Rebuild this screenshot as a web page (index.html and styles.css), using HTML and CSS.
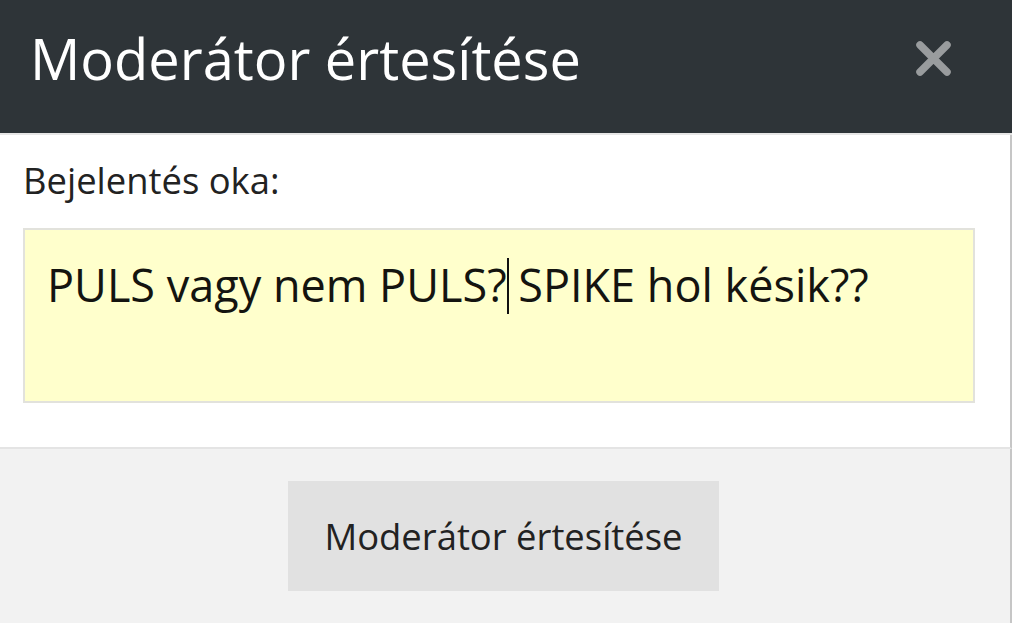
FILE: index.html
```html
<!DOCTYPE html>
<html lang="hu">
<head>
<meta charset="utf-8">
<title>Moderátor értesítése</title>
<link rel="stylesheet" href="styles.css">
</head>
<body>
<div class="dialog">
  <header class="dlg-header">
    <h1 class="dlg-title">Moderátor értesítése</h1>
    <button class="dlg-close" aria-label="Bezárás">
      <svg width="35" height="35" viewBox="0 0 35 35"><path d="M4 4 L31 31 M31 4 L4 31" stroke="#999c9e" stroke-width="7.5" stroke-linecap="round" fill="none"/></svg>
    </button>
  </header>
  <div class="dlg-body">
    <label class="dlg-label">Bejelentés oka:</label>
    <div class="dlg-textarea">PULS vagy nem PULS?<span class="caret"></span> SPIKE hol késik??</div>
  </div>
  <footer class="dlg-footer">
    <button class="dlg-btn">Moderátor értesítése</button>
  </footer>
</div>
</body>
</html>
```
FILE: styles.css
```css
html, body {
  margin: 0;
  padding: 0;
  background: #ffffff;
}
body {
  font-family: "Open Sans", "DejaVu Sans", sans-serif;
  color: #222222;
}
.dialog {
  width: 1012px;
  height: 623px;
  display: flex;
  flex-direction: column;
  overflow: hidden;
}
.dlg-header {
  box-sizing: border-box;
  height: 135px;
  background: #2e3438;
  display: flex;
  align-items: flex-start;
  justify-content: space-between;
  padding: 20px 61px 0 30px;
  border-bottom: 2px solid #e6e6e6;
  flex: none;
}
.dlg-title {
  margin: 0;
  font-weight: 400;
  font-size: 56px;
  line-height: 76px;
  color: #ffffff;
}
.dlg-close {
  margin-top: 21px;
  padding: 0;
  border: 0;
  background: transparent;
  width: 35px;
  height: 35px;
  display: block;
}
.dlg-close svg { display: block; }
.dlg-body {
  box-sizing: border-box;
  background: #ffffff;
  padding: 21px 35px 0 23px;
  height: 314px;
  border-bottom: 2px solid #e4e4e4;
  border-right: 2px solid #c6c6c6;
  flex: none;
}
.dlg-label {
  display: block;
  font-size: 36.4px;
  line-height: 49px;
  color: #222222;
}
.dlg-textarea {
  box-sizing: border-box;
  margin-top: 23px;
  width: 952px;
  height: 175px;
  background: #ffffcc;
  border: 2px solid #e2e2dc;
  padding: 24px 18px 0 22px;
  font-size: 45px;
  line-height: 61px;
  color: #141410;
  white-space: pre;
}
.caret {
  display: inline-block;
  width: 2px;
  height: 56px;
  background: #111111;
  vertical-align: -12px;
  margin-right: -2px;
}
.dlg-footer {
  flex: 1;
  background: #f2f2f2;
  border-right: 2px solid #c6c6c6;
  display: flex;
  justify-content: center;
  align-items: flex-start;
  padding-top: 32px;
}
.dlg-btn {
  box-sizing: border-box;
  width: 431px;
  height: 110px;
  margin-right: 3px;
  border: 0;
  background: #e1e1e1;
  font-family: "Open Sans", "DejaVu Sans", sans-serif;
  font-size: 36.4px;
  color: #222222;
  padding: 0;
}
```
